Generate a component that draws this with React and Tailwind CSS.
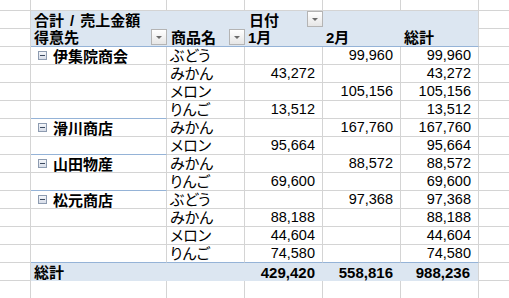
import React from "react";

const GROUPS = [
  {
    name: "伊集院商会",
    items: [
      ["ぶどう", "", "99,960", "99,960"],
      ["みかん", "43,272", "", "43,272"],
      ["メロン", "", "105,156", "105,156"],
      ["りんご", "13,512", "", "13,512"],
    ],
  },
  {
    name: "滑川商店",
    items: [
      ["みかん", "", "167,760", "167,760"],
      ["メロン", "95,664", "", "95,664"],
    ],
  },
  {
    name: "山田物産",
    items: [
      ["みかん", "", "88,572", "88,572"],
      ["りんご", "69,600", "", "69,600"],
    ],
  },
  {
    name: "松元商店",
    items: [
      ["ぶどう", "", "97,368", "97,368"],
      ["みかん", "88,188", "", "88,188"],
      ["メロン", "44,604", "", "44,604"],
      ["りんご", "74,580", "", "74,580"],
    ],
  },
];

function Dropdown() {
  return (
    <span className="ml-auto flex h-[16px] w-[16px] shrink-0 items-center justify-center self-start border border-[#b4b4b4] bg-gradient-to-b from-[#ffffff] to-[#e6e6e6]">
      <span className="h-0 w-0 border-x-[3px] border-t-[3px] border-x-transparent border-t-[#6b6b6b]" />
    </span>
  );
}

function Minus() {
  return (
    <span className="mr-[6px] flex h-[9px] w-[9px] shrink-0 items-center justify-center border border-[#8d9bb0] bg-gradient-to-b from-[#f4f6fa] to-[#d7dde8]">
      <span className="h-px w-[5px] bg-[#3c4a60]" />
    </span>
  );
}

function Num({ v, blue }) {
  return (
    <div
      className={`flex w-[78px] shrink-0 items-end justify-end border-r pr-[7px] ${
        blue ? "border-b border-b-[#95b3d7] border-r-[#d4d4d4]" : "border-b border-[#d4d4d4]"
      }`}
    >
      {v}
    </div>
  );
}

function Blank({ h }) {
  return (
    <div className={`flex ${h}`}>
      <div className="w-[31px] shrink-0 border-r border-b border-[#d4d4d4]" />
      <div className="w-[136px] shrink-0 border-r border-b border-[#d4d4d4]" />
      <div className="w-[78px] shrink-0 border-r border-b border-[#d4d4d4]" />
      <div className="w-[78px] shrink-0 border-r border-b border-[#d4d4d4]" />
      <div className="w-[78px] shrink-0 border-r border-b border-[#d4d4d4]" />
      <div className="w-[78px] shrink-0 border-r border-b border-[#d4d4d4]" />
      <div className="flex-1 border-b border-[#d4d4d4]" />
    </div>
  );
}

export default function App() {
  return (
    <div className="h-[298px] w-[509px] overflow-hidden bg-white text-[14.5px] leading-[17px] text-black font-['Liberation_Sans','Noto_Sans_CJK_JP',sans-serif]">
      <Blank h="h-[11px]" />

      {/* header row 1 */}
      <div className="flex h-[18px]">
        <div className="w-[31px] shrink-0 border-r border-b border-[#d4d4d4]" />
        <div className="flex w-[136px] shrink-0 items-end bg-[#dce6f1] pl-[3px] text-[15px] font-bold">
          合計<span className="mx-[6px]">/</span>売上金額
        </div>
        <div className="w-[78px] shrink-0 bg-[#dce6f1]" />
        <div className="flex w-[78px] shrink-0 items-end bg-[#dce6f1] pl-[4px] text-[15px] font-bold">
          日付
          <Dropdown />
        </div>
        <div className="w-[78px] shrink-0 bg-[#dce6f1]" />
        <div className="w-[78px] shrink-0 border-r border-[#d4d4d4] bg-[#dce6f1]" />
        <div className="flex-1 border-b border-[#d4d4d4]" />
      </div>

      {/* header row 2 */}
      <div className="flex h-[18px]">
        <div className="w-[31px] shrink-0 border-r border-b border-[#d4d4d4]" />
        <div className="flex w-[136px] shrink-0 items-end border-b border-[#95b3d7] bg-[#dce6f1] pl-[3px] text-[15px] font-bold">
          得意先
          <Dropdown />
        </div>
        <div className="flex w-[78px] shrink-0 items-end border-b border-[#95b3d7] bg-[#dce6f1] pl-[4px] text-[15px] font-bold">
          商品名
          <Dropdown />
        </div>
        <div className="flex w-[78px] shrink-0 items-end border-b border-[#95b3d7] bg-[#dce6f1] pl-[3px] text-[15px] font-bold">1月</div>
        <div className="flex w-[78px] shrink-0 items-end border-b border-[#95b3d7] bg-[#dce6f1] pl-[3px] text-[15px] font-bold">2月</div>
        <div className="flex w-[78px] shrink-0 items-end border-r border-b border-r-[#d4d4d4] border-b-[#95b3d7] bg-[#dce6f1] pl-[3px] text-[15px] font-bold">総計</div>
        <div className="flex-1 border-b border-[#d4d4d4]" />
      </div>

      {GROUPS.map((g, gi) =>
        g.items.map((it, i) => {
          const lastItem = i === g.items.length - 1;
          const lastAll = lastItem && gi === GROUPS.length - 1;
          return (
            <div key={`${gi}-${i}`} className="flex h-[18px]">
              <div className="w-[31px] shrink-0 border-r border-b border-[#d4d4d4]" />
              <div
                className={`flex w-[136px] shrink-0 items-center border-r pl-[7px] text-[15px] font-bold ${
                  lastItem ? "border-b border-b-[#95b3d7] border-r-[#d4d4d4]" : "border-b border-[#d4d4d4]"
                }`}
              >
                {i === 0 && (
                  <>
                    <Minus />
                    <span className="pt-[2px]">{g.name}</span>
                  </>
                )}
              </div>
              <div
                className={`flex w-[78px] shrink-0 items-end border-r pl-[3px] text-[15px] [font-feature-settings:'palt'] ${
                  lastAll ? "border-b border-b-[#95b3d7] border-r-[#d4d4d4]" : "border-b border-[#d4d4d4]"
                }`}
              >
                {it[0]}
              </div>
              <Num v={it[1]} blue={lastAll} />
              <Num v={it[2]} blue={lastAll} />
              <Num v={it[3]} blue={lastAll} />
              <div className="flex-1 border-b border-[#d4d4d4]" />
            </div>
          );
        })
      )}

      {/* grand total */}
      <div className="flex h-[18px]">
        <div className="w-[31px] shrink-0 border-r border-b border-[#d4d4d4]" />
        <div className="flex w-[136px] shrink-0 items-end bg-[#dce6f1] pl-[3px] text-[15px] font-bold">総計</div>
        <div className="w-[78px] shrink-0 bg-[#dce6f1]" />
        <div className="flex w-[78px] shrink-0 items-end justify-end bg-[#dce6f1] pr-[8px] text-[15px] font-bold">429,420</div>
        <div className="flex w-[78px] shrink-0 items-end justify-end bg-[#dce6f1] pr-[8px] text-[15px] font-bold">558,816</div>
        <div className="flex w-[78px] shrink-0 items-end justify-end border-r border-[#d4d4d4] bg-[#dce6f1] pr-[8px] text-[15px] font-bold">988,236</div>
        <div className="flex-1 border-b border-[#d4d4d4]" />
      </div>

      <Blank h="h-[18px]" />
    </div>
  );
}
